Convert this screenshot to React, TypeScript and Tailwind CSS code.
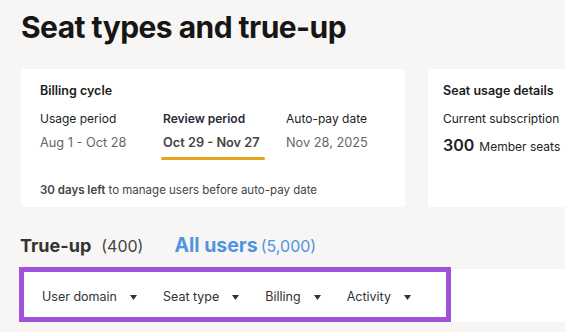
function Caret() {
  return (
    <svg width="7" height="5" viewBox="0 0 7 5" className="ml-[13px]">
      <path d="M0 0h7L3.5 5z" fill="#333" />
    </svg>
  );
}

function Filter({ label }: { label: string }) {
  return (
    <div className="flex items-center whitespace-nowrap">
      <span>{label}</span>
      <Caret />
    </div>
  );
}

export default function App() {
  return (
    <div className="w-[565px] h-[332px] overflow-hidden bg-[#f7f6f4] font-['Inter',sans-serif] text-[#1b1b1b]">
      <h1 className="pl-[21px] pt-[7px] text-[30px] leading-[40px] font-bold tracking-[-0.55px] text-[#161616] whitespace-nowrap">
        Seat types and true-up
      </h1>

      <div className="flex gap-[23px] pl-[21px] mt-[22px]">
        <div className="w-[384px] h-[138px] shrink-0 bg-white rounded-[3px] pl-[19px] pt-[13px]">
          <div className="text-[12.5px] font-semibold leading-[18px]">Billing cycle</div>
          <div className="flex mt-[10px] text-[12px] leading-[18px]">
            <div className="w-[123px]">
              <div className="text-[#222]">Usage period</div>
              <div className="mt-[5px] text-[12.75px] leading-[20px] text-[#666]">Aug 1 - Oct 28</div>
            </div>
            <div className="w-[123px]">
              <div className="font-semibold text-[#2a2a3a]">Review period</div>
              <div className="mt-[5px] text-[12.75px] leading-[20px] font-semibold text-[#444]">Oct 29 - Nov 27</div>
              <div className="mt-[4px] -ml-[2px] w-[104px] h-[3px] rounded-full bg-[#e3a51f]" />
            </div>
            <div>
              <div className="text-[#222]">Auto-pay date</div>
              <div className="mt-[5px] text-[12.75px] leading-[20px] text-[#666]">Nov 28, 2025</div>
            </div>
          </div>
          <div className="mt-[22px] text-[11.5px] leading-[16px] text-[#444] whitespace-nowrap">
            <span className="font-semibold">30 days left</span> to manage users before auto-pay date
          </div>
        </div>

        <div className="w-[200px] h-[138px] shrink-0 bg-white rounded-[3px] pl-[15px] pt-[13px]">
          <div className="text-[12.5px] font-semibold leading-[18px]">Seat usage details</div>
          <div className="mt-[10px] text-[12px] leading-[18px] text-[#222] whitespace-nowrap">Current subscription</div>
          <div className="mt-[5px] flex items-baseline text-[12px] text-[#222] whitespace-nowrap">
            <span className="text-[16px] font-semibold mr-[5px]">300</span>Member seats
          </div>
        </div>
      </div>

      <div className="flex items-baseline pl-[20px] mt-[26px] leading-[24px]">
        <span className="text-[18px] font-bold text-[#333]">True-up</span>
        <span className="ml-[10px] text-[16px] text-[#444]">(400)</span>
        <span className="ml-[31px] text-[19.5px] font-bold text-[#4f94de]">All users</span>
        <span className="ml-[3px] text-[16px] text-[#4f94de]">(5,000)</span>
      </div>

      <div className="mt-[9px] ml-[19px] h-[55px] flex items-center">
        <div className="w-[432px] h-[55px] shrink-0 border-[5px] border-[#a152dc] bg-white flex items-center gap-[26px] pl-[18px] pt-[5px] text-[12.5px] text-[#333]">
          <Filter label="User domain" />
          <Filter label="Seat type" />
          <Filter label="Billing" />
          <Filter label="Activity" />
        </div>
        <div className="flex-1 h-[53px] mt-[2px] bg-white" />
      </div>
    </div>
  );
}
